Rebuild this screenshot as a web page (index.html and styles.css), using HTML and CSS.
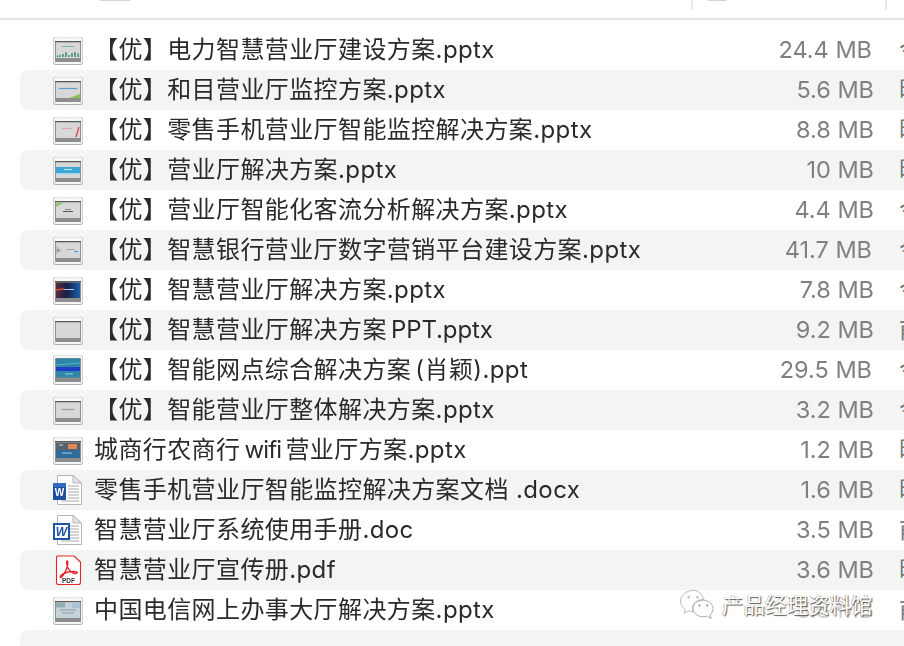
FILE: index.html
```html
<!DOCTYPE html>
<html lang="zh-CN">
<head>
<meta charset="utf-8">
<title>文件列表</title>
<link rel="stylesheet" href="styles.css">
</head>
<body>
<svg class="defs" aria-hidden="true">
  <defs>
    <linearGradient id="rainbow" x1="0" y1="0" x2="1" y2="1">
      <stop offset="0" stop-color="#e8c84a"/><stop offset=".5" stop-color="#6cc08a"/><stop offset="1" stop-color="#dcdcdc"/>
    </linearGradient>
    <linearGradient id="navy" x1="0" y1="0" x2="1" y2="0">
      <stop offset="0" stop-color="#5a2a3a"/><stop offset=".45" stop-color="#16204a"/><stop offset="1" stop-color="#1d5fa8"/>
    </linearGradient>
    <symbol id="frame" viewBox="0 0 30 30">
      <rect x="0" y="2" width="30" height="28" rx="3" fill="#b0b0b0"/>
      <rect x="0.500" y="2.300" width="29" height="26.700" rx="3" fill="#f6f6f6"/>
      <rect x="2" y="6" width="26" height="21" fill="#8e8e8e"/>
      <rect x="2" y="6" width="26" height="1.400" fill="#5c5c5c"/>
      <rect x="3" y="7.400" width="24" height="15.600" fill="#d8d8d8"/>
    </symbol>
    <symbol id="doc" viewBox="0 0 30 30">
      <path d="M4.500 .5H20L28.500 8V29.500H4.500Z" fill="#fff" stroke="#b5b5b5"/>
      <path d="M20 .5V8H28.500Z" fill="#e6e6e6" stroke="#b5b5b5"/>
      <path d="M15 11H26M15 14H26M15 17H26M15 20H26M15 23H26M8 26H26" stroke="#a9a9a9"/>
    </symbol>
  </defs>
</svg>

<header class="head">
  <span class="head-mark"></span>
  <span class="head-sep"></span>
  <span class="head-mark head-mark-small"></span>
  <span class="head-sep head-sep-last"></span>
</header>

<main class="list">
  <div class="row">
    <svg class="icon" viewBox="0 0 30 30"><use href="#frame"/><path d="M9 11.500H21" stroke="#6fb8ac"/><path d="M4.500 22V20.500M7 22V20M10 22V19M13 22V17M16 22V20M19 22V18M22 22V17M25 22V18.500" stroke="#2c8a73" stroke-width="1.400"/></svg>
    <span class="name">【优】电力智慧营业厅建设方案.pptx</span>
    <span class="size size-wide">24.4 MB</span>
    <span class="date">今天</span>
  </div>
  <div class="row">
    <svg class="icon" viewBox="0 0 30 30"><use href="#frame"/><path d="M6 13.500H24" stroke="#5b9cc9" stroke-width="1.200"/><path d="M16 23L27 19V23Z" fill="#8fbf4d"/></svg>
    <span class="name">【优】和目营业厅监控方案.pptx</span>
    <span class="size">5.6 MB</span>
    <span class="date">昨天</span>
  </div>
  <div class="row">
    <svg class="icon" viewBox="0 0 30 30"><use href="#frame"/><path d="M9 13.500H19" stroke="#e2a7a7" stroke-width="1.200"/><path d="M26 12L23 22" stroke="#d9434a" stroke-width="1.300"/></svg>
    <span class="name">【优】零售手机营业厅智能监控解决方案.pptx</span>
    <span class="size">8.8 MB</span>
    <span class="date">昨天</span>
  </div>
  <div class="row">
    <svg class="icon" viewBox="0 0 30 30"><use href="#frame"/><rect x="3" y="12" width="24" height="6" fill="#3ea8d8"/><path d="M11 14.500H19" stroke="#cfe9f5"/><rect x="3" y="18" width="24" height="1.500" fill="#a5d5ea"/></svg>
    <span class="name">【优】营业厅解决方案.pptx</span>
    <span class="size">10 MB</span>
    <span class="date">昨天</span>
  </div>
  <div class="row">
    <svg class="icon" viewBox="0 0 30 30"><use href="#frame"/><path d="M3 7.400H11L3 12Z" fill="url(#rainbow)"/><path d="M12 14.500H18" stroke="#8a8a8a"/><path d="M10 16.500H20" stroke="#555"/></svg>
    <span class="name">【优】营业厅智能化客流分析解决方案.pptx</span>
    <span class="size">4.4 MB</span>
    <span class="date">今天</span>
  </div>
  <div class="row">
    <svg class="icon" viewBox="0 0 30 30"><use href="#frame"/><path d="M3 10L9 15L3 20Z" fill="#b9c4cf"/><path d="M4 14L7 15L4 17Z" fill="#d0607a"/><path d="M13 14.500H21" stroke="#a5a5a5"/><path d="M21 16.500H25" stroke="#35a8d8" stroke-width="1.200"/></svg>
    <span class="name">【优】智慧银行营业厅数字营销平台建设方案.pptx</span>
    <span class="size size-wide">41.7 MB</span>
    <span class="date">今天</span>
  </div>
  <div class="row">
    <svg class="icon" viewBox="0 0 30 30"><use href="#frame"/><rect x="3" y="7.400" width="24" height="15.600" fill="url(#navy)"/><path d="M3 15L11 14" stroke="#d8503c" stroke-width="1.500"/><path d="M11 14.500H21" stroke="#b9c6e6"/></svg>
    <span class="name">【优】智慧营业厅解决方案.pptx</span>
    <span class="size">7.8 MB</span>
    <span class="date">今天</span>
  </div>
  <div class="row">
    <svg class="icon" viewBox="0 0 30 30"><use href="#frame"/></svg>
    <span class="name name-tight">【优】智慧营业厅解决方案 <span class="snug">PPT.pptx</span></span>
    <span class="size">9.2 MB</span>
    <span class="date">前天</span>
  </div>
  <div class="row">
    <svg class="icon" viewBox="0 0 30 30"><rect x="0" y="0" width="30" height="30" rx="3" fill="#b0b0b0"/><rect x=".5" y=".3" width="29" height="28.700" rx="3" fill="#f6f6f6"/><rect x="2" y="3" width="26" height="24" fill="#8e8e8e"/><rect x="3" y="3.500" width="24" height="19" fill="#2f86a8"/><rect x="3" y="12" width="24" height="4" fill="#1d3fc8"/><path d="M3 10L27 8" stroke="#56b3cf"/><path d="M12 19H20" stroke="#9fd3e5"/></svg>
    <span class="name name-tight">【优】智能网点综合解决方案 (肖颖).ppt</span>
    <span class="size size-wide">29.5 MB</span>
    <span class="date">今天</span>
  </div>
  <div class="row">
    <svg class="icon" viewBox="0 0 30 30"><use href="#frame"/><path d="M9 14.500H21" stroke="#a0a0a0" stroke-width="1.300"/></svg>
    <span class="name">【优】智能营业厅整体解决方案.pptx</span>
    <span class="size">3.2 MB</span>
    <span class="date">今天</span>
  </div>
  <div class="row">
    <svg class="icon" viewBox="0 0 30 30"><use href="#frame"/><rect x="3" y="7.400" width="24" height="8" fill="#56626e"/><rect x="3" y="15" width="24" height="8" fill="#2f6d98"/><path d="M15 9H24V14H15Z" fill="#df8a55"/><path d="M6 10H10" stroke="#c7d3de"/><path d="M9 18H19" stroke="#a7cde4"/></svg>
    <span class="name name-tight">城商行农商行 <span class="narrow">wifi</span> 营业厅方案.pptx</span>
    <span class="size">1.2 MB</span>
    <span class="date">昨天</span>
  </div>
  <div class="row">
    <svg class="icon" viewBox="0 0 30 30"><use href="#doc"/><rect x="0" y="8" width="13" height="17" fill="#1f4f9e"/><rect x="0" y="8" width="13" height="4" fill="#2f6cc0"/><text class="word-w" x="6.500" y="21">W</text></svg>
    <span class="name">零售手机营业厅智能监控解决方案文档 .docx</span>
    <span class="size">1.6 MB</span>
    <span class="date">昨天</span>
  </div>
  <div class="row">
    <svg class="icon" viewBox="0 0 30 30"><use href="#doc"/><rect x="1" y="9" width="15" height="15" fill="#fff" stroke="#1f56a5" stroke-width="2"/><text class="word-w word-w-old" x="8.500" y="21">W</text></svg>
    <span class="name">智慧营业厅系统使用手册.doc</span>
    <span class="size">3.5 MB</span>
    <span class="date">前天</span>
  </div>
  <div class="row">
    <svg class="icon" viewBox="0 0 30 30"><path d="M4.500 1H21L27.500 7V27.500Q27.500 29.500 25.500 29.500H5.500Q3.500 29.500 3.500 27.500V2Q3.500 1 4.500 1Z" fill="#fff" stroke="#e6222c" stroke-width="1.100"/><path d="M14 6C13 6.500 14 11 15 13C16.500 16 19 18 22 18.500C24 18.800 25 17.500 23.500 16.800C21 15.800 15 16.500 11 18.500C8 20 6.500 21.500 7.500 22.500C8.500 23 11.500 19 13.500 14C14.500 11 15.500 6 14 6Z" fill="none" stroke="#e6222c" stroke-width="1.400"/><text class="pdf-label" x="15.500" y="28">PDF</text></svg>
    <span class="name">智慧营业厅宣传册.pdf</span>
    <span class="size">3.6 MB</span>
    <span class="date">昨天</span>
  </div>
  <div class="row">
    <svg class="icon" viewBox="0 0 30 30"><use href="#frame"/><rect x="3" y="7.400" width="24" height="15.600" fill="#c4d2da"/><rect x="3" y="7.400" width="9" height="5" fill="#93a9b6"/><rect x="19" y="8" width="8" height="5" fill="#a9c3d4"/><path d="M7 15H23M9 18H21" stroke="#8f9aa2"/></svg>
    <span class="name">中国电信网上办事大厅解决方案.pptx</span>
    <span class="size size-under">3.8 MB</span>
    <span class="date">前天</span>
  </div>
  <div class="row row-empty"></div>
</main>

<aside class="mark">
  <svg class="mark-icon" viewBox="0 0 36 32">
    <path d="M15 1C7.500 1 1.500 6 1.500 12C1.500 15.500 3.500 18.500 6.500 20.500L5.500 24.500L10 22C11.500 22.500 13 22.800 14.500 22.800C14 21.500 13.800 20.500 13.800 19.500C13.800 14 19 10 25.500 10.500C24 5 20 1 15 1Z" fill="#fff" stroke="#b9b9b9"/>
    <path d="M25 11C18.800 11 14.500 15 14.500 19.500C14.500 24.500 19 28 25 28C26.500 28 27.500 27.800 29 27.300L33 30L32 26C34 24.500 35 22 35 19.500C35 15 30.500 11 25 11Z" fill="#fff" stroke="#a8a8a8"/>
    <circle cx="10" cy="8" r="1.200" fill="#bbb"/><circle cx="19" cy="8" r="1.200" fill="#bbb"/>
    <circle cx="21" cy="16.500" r="1.200" fill="#aaa"/><circle cx="29" cy="16.500" r="1.200" fill="#aaa"/>
  </svg>
  <span class="mark-text">产品经理资料馆</span>
</aside>
</body>
</html>
```
FILE: styles.css
```css
* {
  box-sizing: border-box;
}

html,
body {
  margin: 0;
  height: 100%;
  background: #fff;
  overflow: hidden;
}

body {
  position: relative;
  width: 904px;
  height: 646px;
  font-family: Inter, "Noto Sans CJK SC", sans-serif;
}

.defs {
  position: absolute;
  width: 0;
  height: 0;
}

.head {
  display: flex;
  align-items: flex-start;
  height: 20px;
  border-bottom: 2px solid #e4e4e4;
}

.head-mark {
  width: 30px;
  height: 1px;
  margin-left: 100px;
  background: #d4d4d4;
}

.head-sep {
  width: 2px;
  height: 10px;
  margin-left: 561px;
  background: #e8e8e8;
}

.head-mark-small {
  width: 18px;
  margin-left: 15px;
}

.head-sep-last {
  margin-left: 159px;
}

.list {
  display: flex;
  flex-direction: column;
  margin-top: 10px;
  padding-left: 20px;
}

.row {
  display: grid;
  grid-template-columns: 30px 1fr 130px 76px;
  align-items: center;
  flex: none;
  width: 930px;
  height: 40px;
  padding-left: 33px;
  border-radius: 8px 0 0 8px;
  overflow: hidden;
}

.row:nth-child(even) {
  background: #f3f5f5;
}

.icon {
  display: block;
  width: 30px;
  height: 30px;
  filter: blur(0.4px);
}

.name {
  margin-left: 11px;
  font-size: 24px;
  line-height: 40px;
  letter-spacing: 0.4px;
  color: #2a2a2a;
  white-space: nowrap;
  filter: blur(0.3px);
}

.name-tight {
  word-spacing: -3px;
}

.snug {
  letter-spacing: -0.1px;
}

.narrow {
  letter-spacing: -0.85px;
}

.size {
  justify-self: end;
  font-size: 23.5px;
  line-height: 40px;
  color: #808080;
  white-space: nowrap;
  filter: blur(0.3px);
}

.size-wide {
  margin-right: 2px;
}

.size-under {
  color: #cfcfcf;
}

.date {
  margin-left: 25px;
  font-size: 24px;
  line-height: 40px;
  color: #777;
  white-space: nowrap;
}

.row-empty {
  height: 30px;
}

.word-w {
  font-family: "Liberation Sans", sans-serif;
  font-size: 10px;
  font-weight: 700;
  fill: #fff;
  text-anchor: middle;
}

.word-w-old {
  font-size: 12px;
  font-style: italic;
  fill: #1f56a5;
}

.pdf-label {
  font-family: "Liberation Sans", sans-serif;
  font-size: 6.5px;
  font-weight: 700;
  fill: #333;
  text-anchor: middle;
}

.mark {
  position: absolute;
  left: 679px;
  top: 589px;
  display: flex;
  align-items: center;
  gap: 8px;
}

.mark-icon {
  display: block;
  width: 35px;
  height: 32px;
}

.mark-text {
  font-size: 21.5px;
  line-height: 32px;
  color: #fff;
  text-shadow: 1px 1px 1px rgba(0, 0, 0, 0.65), -1px 0 0 rgba(0, 0, 0, 0.25);
  white-space: nowrap;
}
```
